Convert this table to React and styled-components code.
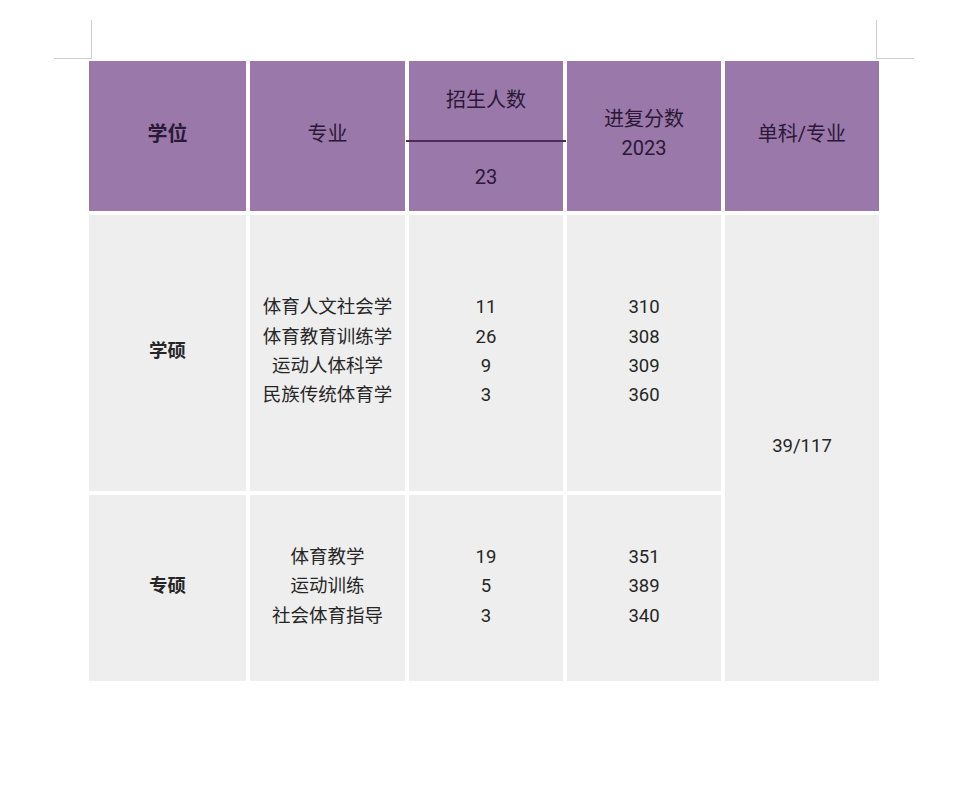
import React from "react";
import styled, { createGlobalStyle } from "styled-components";

const Global = createGlobalStyle`
  html, body { margin: 0; padding: 0; background: #ffffff; }
  body { font-family: Roboto, "Noto Sans CJK SC", sans-serif; }
`;

const Page = styled.div`
  position: relative;
  width: 958px;
  height: 800px;
  box-sizing: border-box;
  padding: 61px 0 0 89px;
`;

const CornerMark = styled.div`
  position: absolute;
  top: 20px;
  left: ${(p) => (p.$side === "left" ? "54px" : "876px")};
  width: 38px;
  height: 39px;
  box-sizing: border-box;
  border-bottom: 1px solid #cfcfcf;
  ${(p) =>
    p.$side === "left"
      ? "border-right: 1px solid #cfcfcf;"
      : "border-left: 1px solid #cfcfcf;"}
`;

const Table = styled.div`
  display: grid;
  grid-template-columns: 157px 155px 154px 154px 154px;
  grid-template-rows: 150px 276px 186px;
  column-gap: 4px;
  row-gap: 4px;
  width: 790px;
`;

const HeadCell = styled.div`
  background: #9b78aa;
  color: #2a1836;
  font-size: 20px;
  font-weight: ${(p) => (p.$bold ? 700 : 400)};
  line-height: 29px;
  display: flex;
  flex-direction: column;
  align-items: center;
  justify-content: center;
  text-align: center;
  padding-bottom: 4px;
`;

const SplitHead = styled.div`
  background: #9b78aa;
  color: #2a1836;
  font-size: 20px;
  display: grid;
  grid-template-rows: 79px 2px 1fr;
  text-align: center;
`;

const SplitPart = styled.div`
  display: flex;
  align-items: center;
  justify-content: center;
  padding-bottom: ${(p) => p.$pb || 0}px;
`;

const Divider = styled.div`
  background: #4a2c5a;
  margin: 0 -3px;
`;

const BodyCell = styled.div`
  background: #eeeeee;
  color: #262626;
  font-size: 18.5px;
  font-weight: ${(p) => (p.$bold ? 700 : 400)};
  line-height: 29.4px;
  display: flex;
  flex-direction: column;
  align-items: center;
  justify-content: center;
  text-align: center;
  padding-bottom: 2px;
  grid-row: ${(p) => p.$row || "auto"};
  grid-column: ${(p) => p.$col || "auto"};
`;

const Line = styled.div`
  white-space: nowrap;
`;

const rows = [
  {
    label: "学硕",
    majors: ["体育人文社会学", "体育教育训练学", "运动人体科学", "民族传统体育学"],
    counts: ["11", "26", "9", "3"],
    scores: ["310", "308", "309", "360"],
  },
  {
    label: "专硕",
    majors: ["体育教学", "运动训练", "社会体育指导"],
    counts: ["19", "5", "3"],
    scores: ["351", "389", "340"],
  },
];

export default function App() {
  return (
    <>
      <Global />
      <Page>
        <CornerMark $side="left" />
        <CornerMark $side="right" />
        <Table>
          <HeadCell $bold>学位</HeadCell>
          <HeadCell>专业</HeadCell>
          <SplitHead>
            <SplitPart $pb={4}>招生人数</SplitPart>
            <Divider />
            <SplitPart>23</SplitPart>
          </SplitHead>
          <HeadCell>
            <Line>进复分数</Line>
            <Line>2023</Line>
          </HeadCell>
          <HeadCell>单科/专业</HeadCell>

          {rows.map((r, i) => (
            <React.Fragment key={r.label}>
              <BodyCell $bold $row={i + 2} $col={1}>
                {r.label}
              </BodyCell>
              <BodyCell $row={i + 2} $col={2}>
                {r.majors.map((m) => (
                  <Line key={m}>{m}</Line>
                ))}
              </BodyCell>
              <BodyCell $row={i + 2} $col={3}>
                {r.counts.map((c, j) => (
                  <Line key={j}>{c}</Line>
                ))}
              </BodyCell>
              <BodyCell $row={i + 2} $col={4}>
                {r.scores.map((s, j) => (
                  <Line key={j}>{s}</Line>
                ))}
              </BodyCell>
            </React.Fragment>
          ))}
          <BodyCell $row="2 / span 2" $col={5}>
            39/117
          </BodyCell>
        </Table>
      </Page>
    </>
  );
}
